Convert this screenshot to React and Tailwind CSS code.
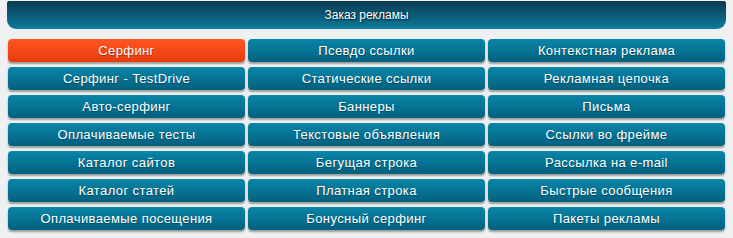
import React from "react";

const items = [
  ["Серфинг", "Псевдо ссылки", "Контекстная реклама"],
  ["Серфинг - TestDrive", "Статические ссылки", "Рекламная цепочка"],
  ["Авто-серфинг", "Баннеры", "Письма"],
  ["Оплачиваемые тесты", "Текстовые объявления", "Ссылки во фрейме"],
  ["Каталог сайтов", "Бегущая строка", "Рассылка на e-mail"],
  ["Каталог статей", "Платная строка", "Быстрые сообщения"],
  ["Оплачиваемые посещения", "Бонусный серфинг", "Пакеты рекламы"],
];

function MenuButton({ label, active }) {
  const color = active
    ? "bg-gradient-to-b from-[#ff5522] to-[#e83c0c]"
    : "bg-gradient-to-b from-[#0a86a8] to-[#04607f]";
  return (
    <a
      href="#"
      className={`${color} flex h-[23px] items-center justify-center rounded-[4px] text-[13px] tracking-[0.4px] text-white shadow-[0_2px_2px_rgba(0,0,0,0.35)] [text-shadow:0_1px_1px_rgba(0,0,0,0.35)]`}
    >
      {label}
    </a>
  );
}

export default function App() {
  return (
    <div className="h-[238px] w-[733px] bg-[#eef0f1] pt-[1px] font-['Liberation_Sans',Arial,sans-serif]">
      <div className="mx-[7px] flex h-[28px] items-center justify-center rounded-b-[9px] rounded-t-[2px] bg-gradient-to-b from-[#093a50] to-[#0a7e9e] text-[12px] text-white [text-shadow:1px_1px_2px_rgba(0,0,0,0.8)]">
        Заказ рекламы
      </div>
      <div className="ml-[8px] mt-[10px] grid w-[717px] grid-cols-3 gap-x-[3px] gap-y-[5px]">
        {items.flatMap((row, r) =>
          row.map((label, c) => (
            <MenuButton key={`${r}-${c}`} label={label} active={r === 0 && c === 0} />
          ))
        )}
      </div>
    </div>
  );
}
